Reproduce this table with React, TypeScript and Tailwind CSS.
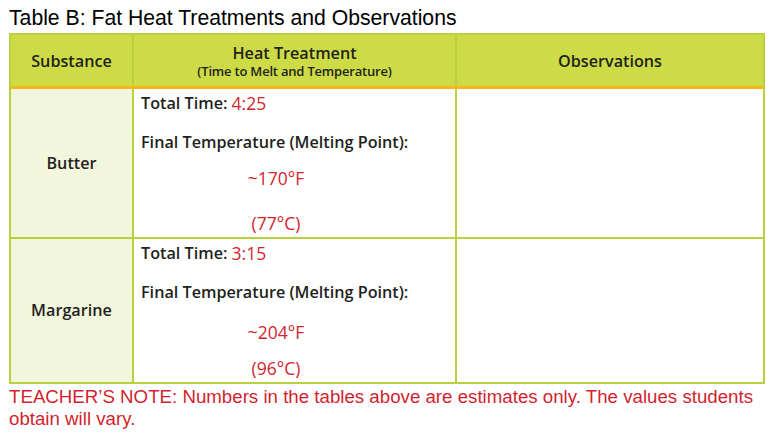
const rows = [
  { name: "Butter", time: "4:25", f: "~170°F", c: "(77°C)", h: "h-[148px]", fl: "leading-[23px]", cl: "leading-[67px]" },
  { name: "Margarine", time: "3:15", f: "~204°F", c: "(96°C)", h: "h-[145px]", fl: "leading-[30px]", cl: "leading-[42px]" },
]

export default function App() {
  return (
    <div className="w-[783px] h-[441px] bg-white pl-[9px] pt-[5px]">
      <h1 className="text-[21.2px] leading-[25px] text-black font-['Liberation_Sans',Arial,sans-serif]">
        Table B: Fat Heat Treatments and Observations
      </h1>
      <div className="mt-[3px] w-[756px] border-2 border-[#bccf3c] font-['Open_Sans',sans-serif] text-[#231f20]">
        <div className="flex h-[54px] bg-[#cddc46] border-b-[3px] border-[#f7b51b]">
          <div className="w-[121px] flex items-center justify-center text-[16.2px] font-semibold pt-[2px]">Substance</div>
          <div className="w-[323px] border-l-2 border-[#bccf3c] flex flex-col items-center justify-center pt-[1px]">
            <span className="text-[16.2px] font-semibold leading-[19px]">Heat Treatment</span>
            <span className="text-[13px] font-semibold leading-[16px] tracking-[-0.2px]">(Time to Melt and Temperature)</span>
          </div>
          <div className="flex-1 border-l-2 border-[#bccf3c] flex items-center justify-center text-[16.2px] font-semibold pt-[2px]">
            Observations
          </div>
        </div>
        {rows.map((r, i) => (
          <div key={r.name} className={`flex ${r.h} ${i > 0 ? "border-t-2 border-[#bccf3c]" : ""}`}>
            <div className="w-[121px] bg-[#f2f6dc] flex items-center justify-center text-[16.2px] font-semibold">{r.name}</div>
            <div className="w-[323px] border-l-2 border-[#bccf3c] pl-[7px]">
              <div className="h-[28px] flex items-center text-[16.2px] font-semibold">
                Total Time:&nbsp;<span className="text-[#d42330] font-normal text-[17.5px]">{r.time}</span>
              </div>
              <div className="h-[50px] flex items-center text-[16.2px] font-semibold">Final Temperature (Melting Point):</div>
              <div className="w-[270px] text-center text-[#d42330] text-[17.5px]">
                <div className={r.fl}>{r.f}</div>
                <div className={r.cl}>{r.c}</div>
              </div>
            </div>
            <div className="flex-1 border-l-2 border-[#bccf3c]" />
          </div>
        ))}
      </div>
      <p className="mt-[2px] w-[760px] text-[18.7px] leading-[22px] text-[#d21f2e] font-['Liberation_Sans',Arial,sans-serif]">
        TEACHER’S NOTE: Numbers in the tables above are estimates only. The values students obtain will vary.
      </p>
    </div>
  )
}
